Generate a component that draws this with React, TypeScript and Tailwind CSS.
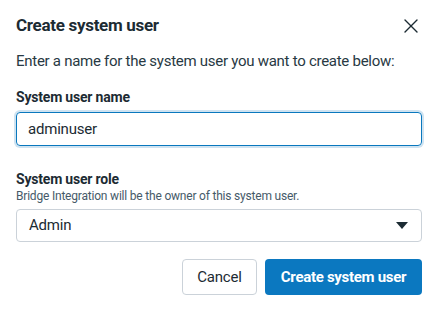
import { X } from 'lucide-react'

export default function App() {
  return (
    <div
      className="w-[438px] h-[310px] bg-white text-[#1c2b33] px-4 pt-[14px]"
      style={{ fontFamily: 'Roboto, "Noto Sans", sans-serif' }}
    >
      {/* Header */}
      <div className="flex items-center justify-between h-[22px]">
        <h1 className="text-[17px] font-bold leading-[22px] tracking-[-0.3px]">Create system user</h1>
        <button type="button" className="text-[#1c2b33] -mr-[1px] mt-[1px]">
          <X className="h-[24px] w-[24px]" strokeWidth={1.4} />
        </button>
      </div>

      <p className="mt-[15px] text-[15px] leading-[20px] text-[#283943] whitespace-nowrap tracking-[-0.27px]">
        Enter a name for the system user you want to create below:
      </p>

      {/* Name */}
      <label className="block mt-[17px] text-[14px] font-bold leading-[18px] tracking-[-0.2px]">
        System user name
      </label>
      <div className="mt-[6px] h-[34px] rounded-[4px] border border-[#0a78be] ring-2 ring-[#cfe3f1] flex items-center px-[11px]">
        <span className="text-[15px] text-[#1c2b33] tracking-[-0.2px]">adminuser</span>
      </div>

      {/* Role */}
      <label className="block mt-[24px] text-[14px] font-bold leading-[18px] tracking-[-0.2px]">
        System user role
      </label>
      <p className="text-[12px] leading-[16px] text-[#465a69] tracking-[-0.2px]">
        Bridge Integration will be the owner of this system user.
      </p>
      <div className="mt-[5px] h-[33px] rounded-[4px] border border-[#cbd2d9] flex items-center justify-between pl-[12px] pr-[13px]">
        <span className="text-[15px] tracking-[-0.2px]">Admin</span>
        <svg width="12" height="7" viewBox="0 0 12 7">
          <path d="M0 0h12L6 7z" fill="#1c2b33" />
        </svg>
      </div>

      {/* Actions */}
      <div className="mt-[17px] flex justify-end gap-[8px]">
        <button
          type="button"
          className="h-[36px] w-[75px] rounded-[4px] border border-[#cbd2d9] bg-white text-[15px] text-[#1c2b33] tracking-[-0.2px]"
        >
          Cancel
        </button>
        <button
          type="button"
          className="h-[36px] w-[157px] rounded-[4px] bg-[#0b78c0] text-[15px] font-bold text-white tracking-[-0.3px]"
        >
          Create system user
        </button>
      </div>
    </div>
  )
}
